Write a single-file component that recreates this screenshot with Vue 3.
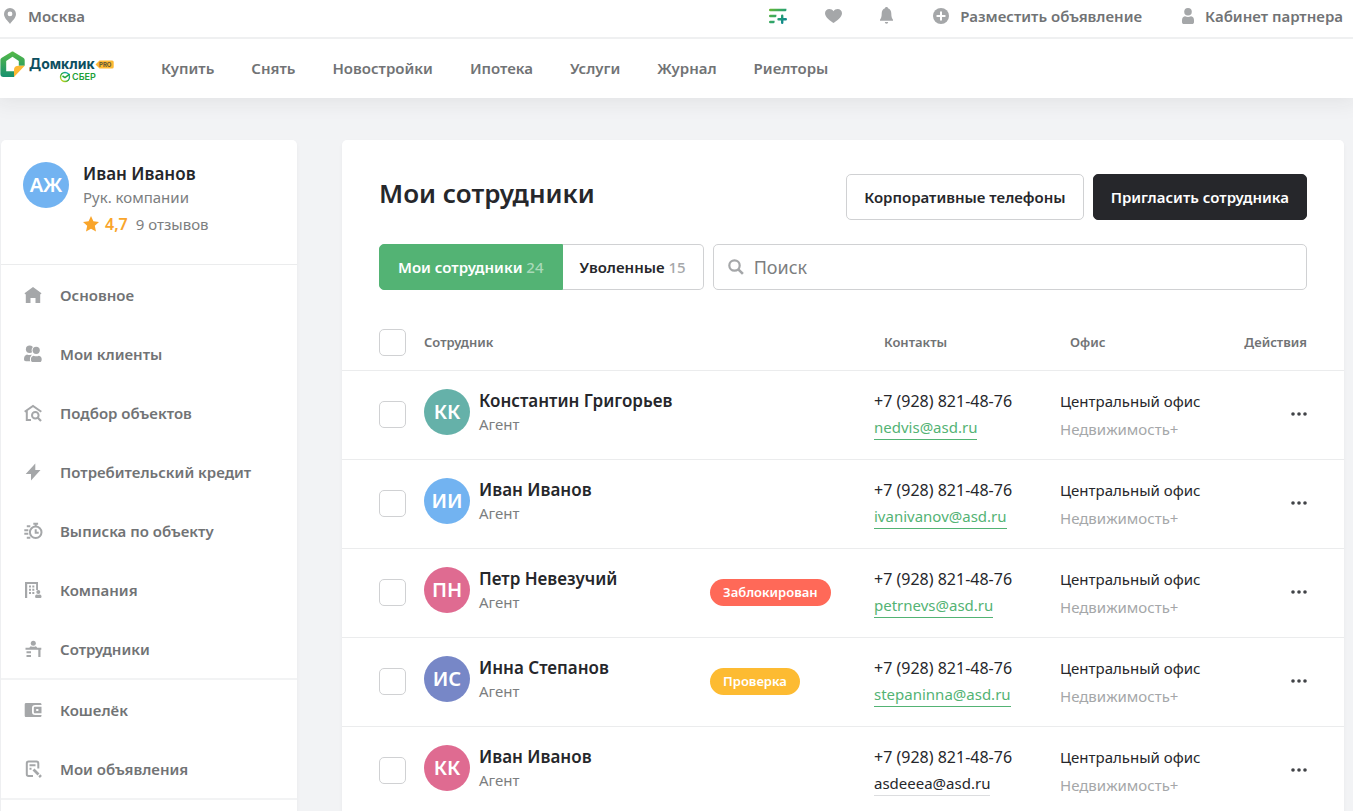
<script setup>
import { ref } from 'vue'

const nav = ['Купить', 'Снять', 'Новостройки', 'Ипотека', 'Услуги', 'Журнал', 'Риелторы']

const menu = [
  [
    { icon: 'home', label: 'Основное' },
    { icon: 'clients', label: 'Мои клиенты' },
    { icon: 'search', label: 'Подбор объектов' },
    { icon: 'bolt', label: 'Потребительский кредит' },
    { icon: 'timer', label: 'Выписка по объекту' },
    { icon: 'company', label: 'Компания' },
    { icon: 'staff', label: 'Сотрудники' }
  ],
  [
    { icon: 'wallet', label: 'Кошелёк' },
    { icon: 'ads', label: 'Мои объявления' }
  ]
]

const employees = [
  { id: 1, initials: 'КК', tone: 'teal', name: 'Константин Григорьев', email: 'nedvis@asd.ru' },
  { id: 2, initials: 'ИИ', tone: 'blue', name: 'Иван Иванов', email: 'ivanivanov@asd.ru' },
  { id: 3, initials: 'ПН', tone: 'pink', name: 'Петр Невезучий', email: 'petrnevs@asd.ru', status: 'Заблокирован', statusTone: 'blocked' },
  { id: 4, initials: 'ИС', tone: 'indigo', name: 'Инна Степанов', email: 'stepaninna@asd.ru', status: 'Проверка', statusTone: 'review' },
  { id: 5, initials: 'КК', tone: 'pink', name: 'Иван Иванов', email: 'asdeeea@asd.ru', muted: true }
]

const query = ref('')
const selected = ref([])
</script>

<template>
  <div class="page">
    <header class="header">
      <div class="topbar">
        <a href="#" class="top-link city">
          <svg width="12" height="16" viewBox="0 0 12 16"><path fill-rule="evenodd" fill="#a5a7a9" d="M6 0a6 6 0 0 1 6 6c0 4-4 7-6 10C4 13 0 10 0 6a6 6 0 0 1 6-6zm0 3.500a2.400 2.400 0 1 0 0 4.800 2.400 2.400 0 0 0 0-4.800z" /></svg>
          <span>Москва</span>
        </a>
        <div class="top-icons">
          <button type="button" class="icon-btn" aria-label="Сравнение">
            <svg width="18" height="16" viewBox="0 0 18 16" fill="none" stroke-linecap="round" stroke-width="2.4">
              <defs><linearGradient id="cmp" x1="0" y1="0" x2="18" y2="16" gradientUnits="userSpaceOnUse"><stop offset="0" stop-color="#6ab82e" /><stop offset=".5" stop-color="#2fa56b" /><stop offset="1" stop-color="#007a9b" /></linearGradient></defs>
              <path stroke="url(#cmp)" d="M1.200 2h15v.01M1.200 8h5v.01M1.200 14h3.200v.01M13.200 7.700v7.100M9.500 11.200h7.300" />
            </svg>
          </button>
          <button type="button" class="icon-btn" aria-label="Избранное">
            <svg width="17" height="14" viewBox="0 0 17 14"><path fill="#a5a7a9" d="M8.500 14C5.800 12.400 0 8.600 0 4.300 0 1.600 2 0 4.300 0c1.800 0 3.300.8 4.200 2.300C9.400.8 10.900 0 12.700 0 15 0 17 1.600 17 4.300c0 4.300-5.800 8.100-8.500 9.700z" /></svg>
          </button>
          <button type="button" class="icon-btn" aria-label="Уведомления">
            <svg width="13" height="17" viewBox="0 0 13 17"><path fill="#a5a7a9" d="M6.500 0c.8 0 1.400.5 1.500 1.300C10.200 2 11.300 4 11.300 6.500c0 3 .5 4.700 1.700 6.300v1H0v-1c1.200-1.600 1.700-3.300 1.700-6.300C1.700 4 2.800 2 5 1.300 5.100.5 5.700 0 6.500 0zM4.800 15h3.400a1.700 1.700 0 0 1-3.400 0z" /></svg>
          </button>
        </div>
        <a href="#" class="top-link post">
          <svg width="16" height="16" viewBox="0 0 16 16"><circle cx="8" cy="8" r="8" fill="#a5a7a9" /><path stroke="#fff" stroke-width="2" stroke-linecap="round" d="M8 4.300v7.400M4.300 8h7.400" /></svg>
          <span>Разместить объявление</span>
        </a>
        <a href="#" class="top-link cabinet">
          <svg width="12" height="16" viewBox="0 0 12 16" fill="#a5a7a9"><circle cx="6" cy="3.800" r="3.800" /><path d="M3 8.200c1.800 1 4.200 1 6 0 2 .4 3 1.800 3 4V14c0 1.400-.8 2-2 2H2c-1.200 0-2-.6-2-2v-1.800c0-2.200 1-3.600 3-4z" /></svg>
          <span>Кабинет партнера</span>
        </a>
      </div>
      <div class="mainbar">
        <a href="#" class="logo" aria-label="Домклик PRO">
          <svg width="116" height="34" viewBox="0 0 116 34">
            <defs>
              <linearGradient id="house" x1="0" y1="0" x2="0" y2="1"><stop offset="0" stop-color="#55b947" /><stop offset="1" stop-color="#17906f" /></linearGradient>
              <linearGradient id="ring" x1="0" y1="1" x2="1" y2="0"><stop offset="0" stop-color="#f4e21d" /><stop offset=".5" stop-color="#21a838" /><stop offset="1" stop-color="#0aa5df" /></linearGradient>
            </defs>
            <path fill="url(#house)" fill-rule="evenodd" d="M11.300.9c.8-.5 1.700-.5 2.500 0l9.500 5.900c.9.6 1.400 1.400 1.400 2.400V14.800h-5.900V10L12.500 5.800 6.200 10v10.200h8.600L14 26H3.400C1.500 26 .4 25 .4 23V9.200c0-1 .5-1.800 1.400-2.400z" />
            <path fill="#fdb833" d="M18.800 14.800h5.900L14 26v-7.300c0-2.600 1.600-3.900 4.800-3.900z" />
            <text class="logo-name" x="29" y="18">Домклик</text>
            <path fill="#fdb833" d="M99.500 9.500h12.700a1.500 1.500 0 0 1 1.500 1.500v5a1.500 1.500 0 0 1-1.500 1.500H99.500l-4-4z" />
            <text class="logo-pro" x="99" y="16">PRO</text>
            <circle cx="65" cy="26" r="4.500" fill="none" stroke="url(#ring)" stroke-width="1.400" />
            <path d="m62.500 25 2.500 1.600 4.700-3.400" fill="none" stroke="#21a838" stroke-width="1.500" />
            <text class="logo-sber" x="72" y="29">СБЕР</text>
          </svg>
        </a>
        <nav class="nav">
          <a v-for="item in nav" :key="item" href="#">{{ item }}</a>
        </nav>
      </div>
    </header>

    <div class="layout">
      <aside class="sidebar card">
        <div class="profile">
          <span class="avatar blue">АЖ</span>
          <div>
            <div class="person-name">Иван Иванов</div>
            <div class="person-role">Рук. компании</div>
            <div class="rating">
              <svg width="16" height="16" viewBox="0 0 16 16"><path fill="#f9a52b" d="m8 0 2.400 5.300 5.600.6-4.200 3.900L13 15.600l-5-2.900-5 2.900 1.200-5.800L0 5.900l5.600-.6z" /></svg>
              <b>4,7</b>
              <span>9 отзывов</span>
            </div>
          </div>
        </div>
        <ul v-for="(group, i) in menu" :key="i" class="menu">
          <li v-for="item in group" :key="item.label">
            <a href="#">
              <svg class="menu-icon" width="20" height="20" viewBox="0 0 20 20">
                <path v-if="item.icon === 'home'" d="M10 2 18.500 8.200 17.700 9.200H17.200V18h-4.700v-5H7.500v5H2.800V9.200h-.6L1.500 8.200z" />
                <g v-else-if="item.icon === 'clients'">
                  <circle cx="6.600" cy="5.300" r="3.700" />
                  <path d="M4 10.500c1.500.8 3 .8 4.500 0V17.200H3C1.600 17.200 1 16.500 1 15c0-2.300 1-3.900 3-4.500z" />
                  <g class="cutout">
                    <circle cx="13.200" cy="6.300" r="3.600" />
                    <path d="M10.700 11.700c1.600.8 3.600.8 5.200 0 1.900.4 2.800 1.600 2.800 3.500 0 1.900-.6 2.800-1.800 2.800H9.700c-1.200 0-1.800-.9-1.800-2.800 0-1.900.9-3.100 2.800-3.500z" />
                  </g>
                </g>
                <g v-else-if="item.icon === 'search'" fill="none" stroke="#a5a7a9" stroke-width="2">
                  <path d="m1.700 8.800 8.300-5.900 8.300 5.900M3.800 7.500V17H8" />
                  <circle cx="12.300" cy="12.200" r="3.300" /><path stroke-width="2.200" d="m14.600 14.500 3.400 3.500" />
                </g>
                <path v-else-if="item.icon === 'bolt'" d="M12.300 1.500V8H17.500L8 18.500V12H2.700z" />
                <g v-else-if="item.icon === 'timer'" fill="none" stroke="#a5a7a9" stroke-width="2">
                  <circle cx="12.700" cy="11.300" r="5.800" />
                  <path d="M10.300 2.800h4.800M12.700 3V6M12.700 8.300v3.500h3M3.800 5.300h3.500M1.300 9.200h4M1.300 12.800h4M3.800 16.700h3.500" />
                </g>
                <g v-else-if="item.icon === 'company'">
                  <path d="M2 2h13v8h-1.900V3.900H4.200V18H2zM6 5.500h2v2H6zm3.300 0h2v2h-2zM6 8.800h2v2H6zm3.300 0h2v2h-2zM6 12.100h2v2H6zm3.300 0h2v2h-2z" />
                  <circle cx="15.300" cy="12" r="2" /><path d="M13.800 14.500c1 .4 2 .4 3 0 1.200.3 1.700.9 1.700 1.900 0 1-.5 1.600-1.500 1.600h-3.400c-1 0-1.500-.6-1.500-1.600 0-1 .5-1.600 1.700-1.900z" />
                </g>
                <g v-else-if="item.icon === 'staff'">
                  <circle cx="10.300" cy="4.200" r="2.500" />
                  <path d="M7.800 7.300c1.700.7 3.400.7 5 0 .8.300 1.200.9 1.400 1.500h4.100v2h-.8V18h-2.200v-7.200H2.500v-2h3.900c.2-.6.600-1.200 1.400-1.500zM3.500 12.200H8v2H3.500zm0 3.800H8v2H3.500z" />
                </g>
                <path v-else-if="item.icon === 'wallet'" fill-rule="evenodd" d="M3.200 3h13.600c1.100 0 1.700.5 1.700 1.500V5H12.200C10 5 9 6.200 9 8v4c0 1.800 1 3 3.200 3h6.300v.5c0 1-.6 1.500-1.700 1.500H3.200c-1 0-1.500-.5-1.500-1.500v-11C1.700 3.500 2.200 3 3.200 3zm8.800 3.700h6.500v6.600H12c-.8 0-1.200-.5-1.200-1.300V8c0-.8.400-1.300 1.200-1.300zm1.200 2.200v2.200h2.200V8.900z" />
                <g v-else fill="none" stroke="#a5a7a9" stroke-width="2">
                  <path d="M10 17H5.600c-1.200 0-1.800-.6-1.800-1.800V4.400c0-1.200.6-1.800 1.800-1.800h7.900c1.200 0 1.800.6 1.800 1.800v5M6.500 6.200h6M6.500 9.800h2" />
                  <path stroke-width="2.800" d="m10.500 10.500 5 5M16.300 16.300l1.600 1.600" />
                </g>
              </svg>
              <span>{{ item.label }}</span>
            </a>
          </li>
        </ul>
      </aside>

      <main class="content card">
        <div class="heading">
          <h1>Мои сотрудники</h1>
          <div class="actions">
            <button type="button" class="btn">Корпоративные телефоны</button>
            <button type="button" class="btn dark">Пригласить сотрудника</button>
          </div>
        </div>
        <div class="filters">
          <div class="tabs">
            <button type="button" class="tab active">Мои сотрудники <span>24</span></button>
            <button type="button" class="tab">Уволенные <span>15</span></button>
          </div>
          <label class="search">
            <svg width="16" height="16" viewBox="0 0 16 16" fill="none" stroke="#a5a7a9"><circle cx="6.500" cy="6.500" r="5.200" stroke-width="2.200" /><path d="m10.300 10.300 4.600 4.600" stroke-width="2.600" /></svg>
            <input v-model="query" type="text" placeholder="Поиск" aria-label="Поиск" />
          </label>
        </div>
        <table class="staff">
          <colgroup>
            <col class="c-check" /><col /><col class="c-status" /><col class="c-contact" /><col class="c-office" /><col class="c-actions" />
          </colgroup>
          <thead>
            <tr>
              <th class="check"><input type="checkbox" aria-label="Выбрать всех" /></th>
              <th>Сотрудник</th>
              <th></th>
              <th class="shifted">Контакты</th>
              <th class="shifted">Офис</th>
              <th class="end">Действия</th>
            </tr>
          </thead>
          <tbody>
            <tr v-for="e in employees" :key="e.id">
              <td class="check"><input v-model="selected" type="checkbox" :value="e.id" :aria-label="e.name" /></td>
              <td class="person-cell">
                <div class="person">
                  <span class="avatar" :class="e.tone">{{ e.initials }}</span>
                  <div>
                    <div class="person-name">{{ e.name }}</div>
                    <div class="person-role">Агент</div>
                  </div>
                </div>
              </td>
              <td><span v-if="e.status" class="badge" :class="e.statusTone">{{ e.status }}</span></td>
              <td class="info-cell">
                <div class="line">+7 (928) 821-48-76</div>
                <a :href="'mailto:' + e.email" class="email" :class="{ muted: e.muted }">{{ e.email }}</a>
              </td>
              <td class="info-cell office">
                <div class="line">Центральный офис</div>
                <div class="line office-sub">Недвижимость+</div>
              </td>
              <td class="end">
                <button type="button" class="more" aria-label="Действия">
                  <svg width="16" height="4" viewBox="0 0 16 4" fill="#414347"><circle cx="2" cy="2" r="1.800" /><circle cx="8" cy="2" r="1.800" /><circle cx="14" cy="2" r="1.800" /></svg>
                </button>
              </td>
            </tr>
          </tbody>
        </table>
      </main>
    </div>
  </div>
</template>

<style>
html {
  scrollbar-width: none;
}
body {
  margin: 0;
  background: #f2f3f5;
}
</style>

<style scoped>
.page {
  font-family: "Noto Sans", "Open Sans", sans-serif;
  font-size: 16px;
  line-height: 24px;
  color: #26272b;
}
.page * {
  box-sizing: border-box;
}
a {
  color: inherit;
  text-decoration: none;
}
button {
  font: inherit;
  color: inherit;
  cursor: pointer;
}
svg {
  display: block;
  flex: none;
}
.header {
  background: #fff;
  box-shadow: 0 0 20px 4px rgba(38, 39, 43, 0.08);
  color: #717375;
  font-size: 15px;
  font-weight: 600;
}
.topbar {
  display: flex;
  align-items: center;
  height: 39px;
  padding: 0 10px 6px 4px;
  border-bottom: 2px solid #eff0f1;
}
.top-link {
  display: flex;
  align-items: center;
  gap: 11px;
}
.city {
  gap: 12px;
}
.top-icons {
  display: flex;
  align-items: center;
  gap: 38px;
  margin-left: auto;
}
.icon-btn {
  display: block;
  padding: 0;
  border: 0;
  background: none;
}
.post,
.cabinet {
  margin-left: 40px;
}
.mainbar {
  display: flex;
  align-items: center;
  height: 59px;
  padding-bottom: 2px;
}
.nav {
  display: flex;
  gap: 37px;
  margin-left: 45px;
}
.logo-name {
  font: 700 14px Inter, sans-serif;
  fill: #0d4f60;
}
.logo-pro {
  font: 700 6px Inter, sans-serif;
  fill: #5d5433;
}
.logo-sber {
  font: 600 9px Inter, sans-serif;
  fill: #21a038;
}
.layout {
  display: grid;
  grid-template-columns: 296px minmax(0, 1fr);
  gap: 45px;
  padding: 42px 9px 0 1px;
}
.card {
  background: #fff;
  border-radius: 5px 5px 0 0;
  box-shadow: 0 2px 4px rgba(38, 39, 43, 0.04);
}
.profile {
  display: flex;
  gap: 14px;
  height: 125px;
  padding: 22px;
  border-bottom: 1px solid #ebeced;
}
.avatar {
  display: flex;
  flex: none;
  align-items: center;
  justify-content: center;
  width: 46px;
  height: 46px;
  border-radius: 50%;
  color: #fff;
  font-size: 20px;
  font-weight: 600;
}
.blue {
  background: #72b3f1;
}
.teal {
  background: #65b1a9;
}
.pink {
  background: #df6b91;
}
.indigo {
  background: #7787c7;
}
.person-name {
  font-size: 17px;
  line-height: 23px;
  font-weight: 600;
}
.person-role {
  color: #7c7e80;
  font-size: 15px;
}
.rating {
  display: flex;
  align-items: center;
  gap: 6px;
  margin-top: 3px;
  color: #7c7e80;
  font-size: 15px;
}
.rating b {
  color: #f9a52b;
  font-size: 16px;
  font-weight: 600;
}
.rating span {
  margin-left: 2px;
}
.menu {
  margin: 0;
  padding: 0;
  list-style: none;
  border-bottom: 2px solid #f2f3f4;
}
.menu a {
  display: flex;
  align-items: center;
  gap: 17px;
  height: 59px;
  padding-left: 22px;
  color: #717375;
  font-size: 15px;
  font-weight: 600;
}
.menu-icon {
  fill: #a5a7a9;
}
.cutout {
  stroke: #fff;
  stroke-width: 2;
  paint-order: stroke;
}
.content {
  padding-top: 34px;
}
.heading,
.filters {
  display: flex;
  align-items: center;
  padding: 0 37px;
}
.heading {
  justify-content: space-between;
}
h1 {
  margin: 0;
  padding-bottom: 8px;
  font-size: 26px;
  line-height: 36px;
  font-weight: 600;
}
.actions {
  display: flex;
  gap: 9px;
}
.btn,
.tab {
  height: 46px;
  padding: 0 17px;
  border: 1px solid #d0d1d3;
  border-radius: 5px;
  background: #fff;
  font-size: 15px;
  font-weight: 600;
  white-space: nowrap;
}
.dark {
  border-color: #26272b;
  background: #26272b;
  color: #fff;
}
.filters {
  gap: 9px;
  margin-top: 24px;
}
.tabs {
  display: flex;
}
.tab {
  border-left: 0;
  border-radius: 0 5px 5px 0;
}
.tab span {
  color: #a5a7a9;
  font-weight: 500;
}
.tab.active {
  padding: 0 18px;
  border: 1px solid #53b374;
  border-radius: 5px 0 0 5px;
  background: #53b374;
  color: #fff;
}
.tab.active span {
  color: #a9dab9;
}
.search {
  display: flex;
  flex: 1;
  align-items: center;
  gap: 10px;
  height: 46px;
  padding: 0 14px;
  border: 1px solid #d0d1d3;
  border-radius: 5px;
}
.search input {
  flex: 1;
  min-width: 0;
  padding: 0;
  border: 0;
  outline: 0;
  background: none;
  color: inherit;
  font: inherit;
  font-size: 18px;
}
.search input::placeholder {
  color: #7c7e80;
  opacity: 1;
}
.staff {
  width: 100%;
  margin-top: 24px;
  border-collapse: separate;
  border-spacing: 0;
  table-layout: fixed;
}
.c-check {
  width: 82px;
}
.c-status {
  width: 164px;
}
.c-contact {
  width: 186px;
}
.c-office {
  width: 180px;
}
.c-actions {
  width: 104px;
}
th {
  height: 57px;
  padding: 0;
  border-bottom: 1px solid #ebeced;
  color: #717375;
  font-size: 13px;
  font-weight: 600;
  text-align: left;
}
td {
  height: 89px;
  padding: 0 0 2px;
  border-bottom: 1px solid #ebeced;
  vertical-align: middle;
}
.person-cell {
  padding-top: 18px;
  vertical-align: top;
}
.info-cell {
  padding-top: 16px;
  vertical-align: top;
}
.office {
  font-size: 15px;
}
.check {
  padding-left: 37px;
}
th.shifted {
  padding-left: 10px;
}
.end {
  padding-right: 37px;
  text-align: right;
}
.check input {
  display: block;
  appearance: none;
  width: 27px;
  height: 27px;
  margin: 0;
  border: 1px solid #d0d1d3;
  border-radius: 5px;
  background: #fff;
}
.check input:checked {
  border-color: #53b374;
  background: #53b374;
}
.person {
  display: flex;
  gap: 9px;
}
.badge {
  display: block;
  width: max-content;
  height: 27px;
  padding: 0 13px;
  border-radius: 14px;
  color: #fff;
  font-size: 13px;
  line-height: 27px;
  font-weight: 600;
}
.blocked {
  background: #ff6958;
}
.review {
  background: #fdbb32;
}
.line {
  line-height: 28px;
}
.office-sub {
  color: #a5a7a9;
}
.email {
  display: block;
  width: max-content;
  color: #53b374;
  font-size: 15px;
  border-bottom: 1px solid #53b374;
}
.email.muted {
  color: inherit;
  border-color: #dcdddf;
}
.more {
  display: block;
  margin-left: auto;
  padding: 8px 0;
  border: 0;
  background: none;
}
</style>
